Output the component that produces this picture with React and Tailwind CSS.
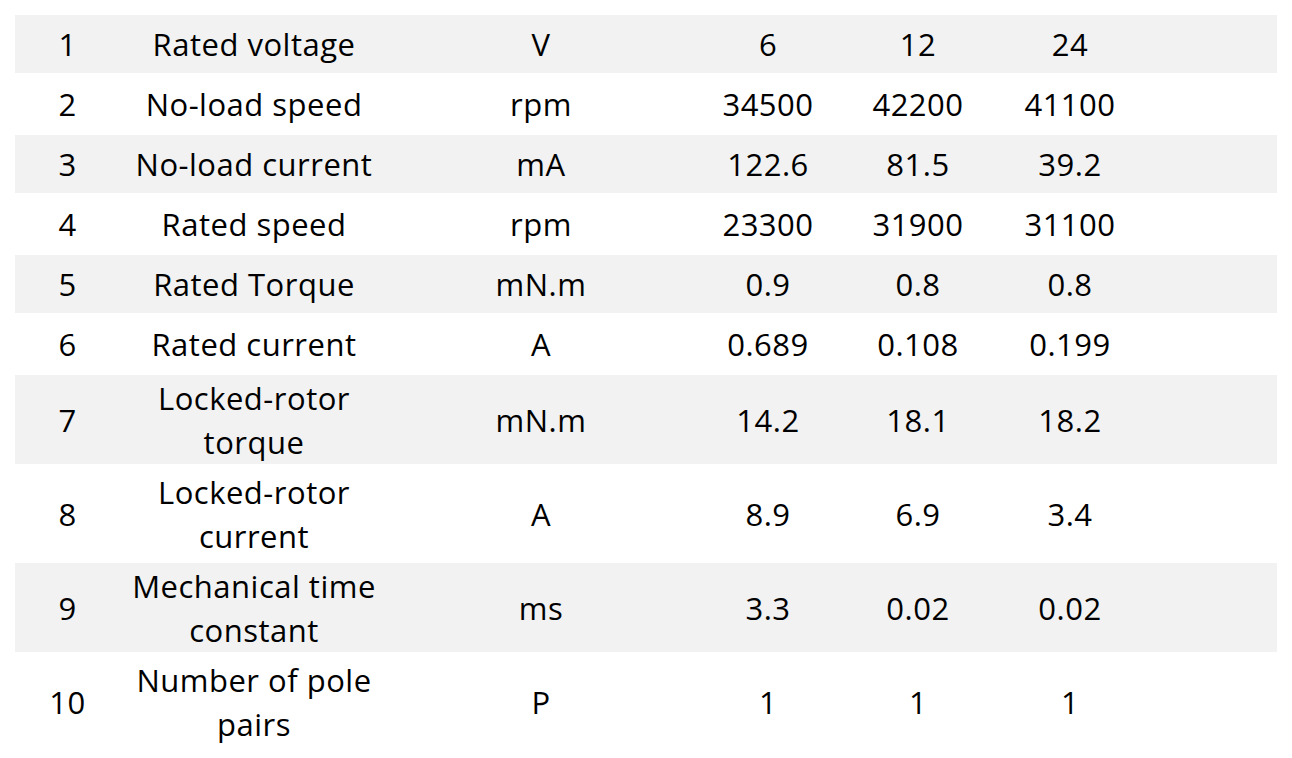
import React from 'react';

const rows = [
  { no: 1, name: 'Rated voltage', unit: 'V', v: ['6', '12', '24'] },
  { no: 2, name: 'No-load speed', unit: 'rpm', v: ['34500', '42200', '41100'] },
  { no: 3, name: 'No-load current', unit: 'mA', v: ['122.6', '81.5', '39.2'] },
  { no: 4, name: 'Rated speed', unit: 'rpm', v: ['23300', '31900', '31100'] },
  { no: 5, name: 'Rated Torque', unit: 'mN.m', v: ['0.9', '0.8', '0.8'] },
  { no: 6, name: 'Rated current', unit: 'A', v: ['0.689', '0.108', '0.199'] },
  { no: 7, name: 'Locked-rotor torque', unit: 'mN.m', v: ['14.2', '18.1', '18.2'], tall: true },
  { no: 8, name: 'Locked-rotor current', unit: 'A', v: ['8.9', '6.9', '3.4'], tall: true },
  { no: 9, name: 'Mechanical time constant', unit: 'ms', v: ['3.3', '0.02', '0.02'], tall: true },
  { no: 10, name: 'Number of pole pairs', unit: 'P', v: ['1', '1', '1'], tall: true },
];

export default function App() {
  return (
    <div className="min-h-screen bg-white pt-[15px] pl-[15px] text-black" style={{ fontFamily: '"Open Sans", "Noto Sans", sans-serif' }}>
      <table className="table-fixed border-collapse w-[1262px] text-[31px] leading-[44px] tracking-[0.5px]">
        <colgroup>
          <col className="w-[105px]" />
          <col className="w-[268px]" />
          <col className="w-[306px]" />
          <col className="w-[148px]" />
          <col className="w-[152px]" />
          <col className="w-[152px]" />
          <col className="w-[131px]" />
        </colgroup>
        <tbody>
          {rows.map((r, i) => {
            const gray = i % 2 === 0;
            const h = r.tall ? (gray ? 'h-[89px]' : 'h-[99px]') : (gray ? 'h-[58px]' : 'h-[62px]');
            return (
              <tr key={r.no} className={`${h} ${gray ? 'bg-[#f2f2f2]' : 'bg-white'}`}>
                <td className="text-center p-0">{r.no}</td>
                <td className="text-center px-[9px] py-0">{r.name}</td>
                <td className="text-center p-0">{r.unit}</td>
                {r.v.map((x, j) => (
                  <td key={j} className="text-center p-0">{x}</td>
                ))}
                <td className="p-0"></td>
              </tr>
            );
          })}
        </tbody>
      </table>
    </div>
  );
}
